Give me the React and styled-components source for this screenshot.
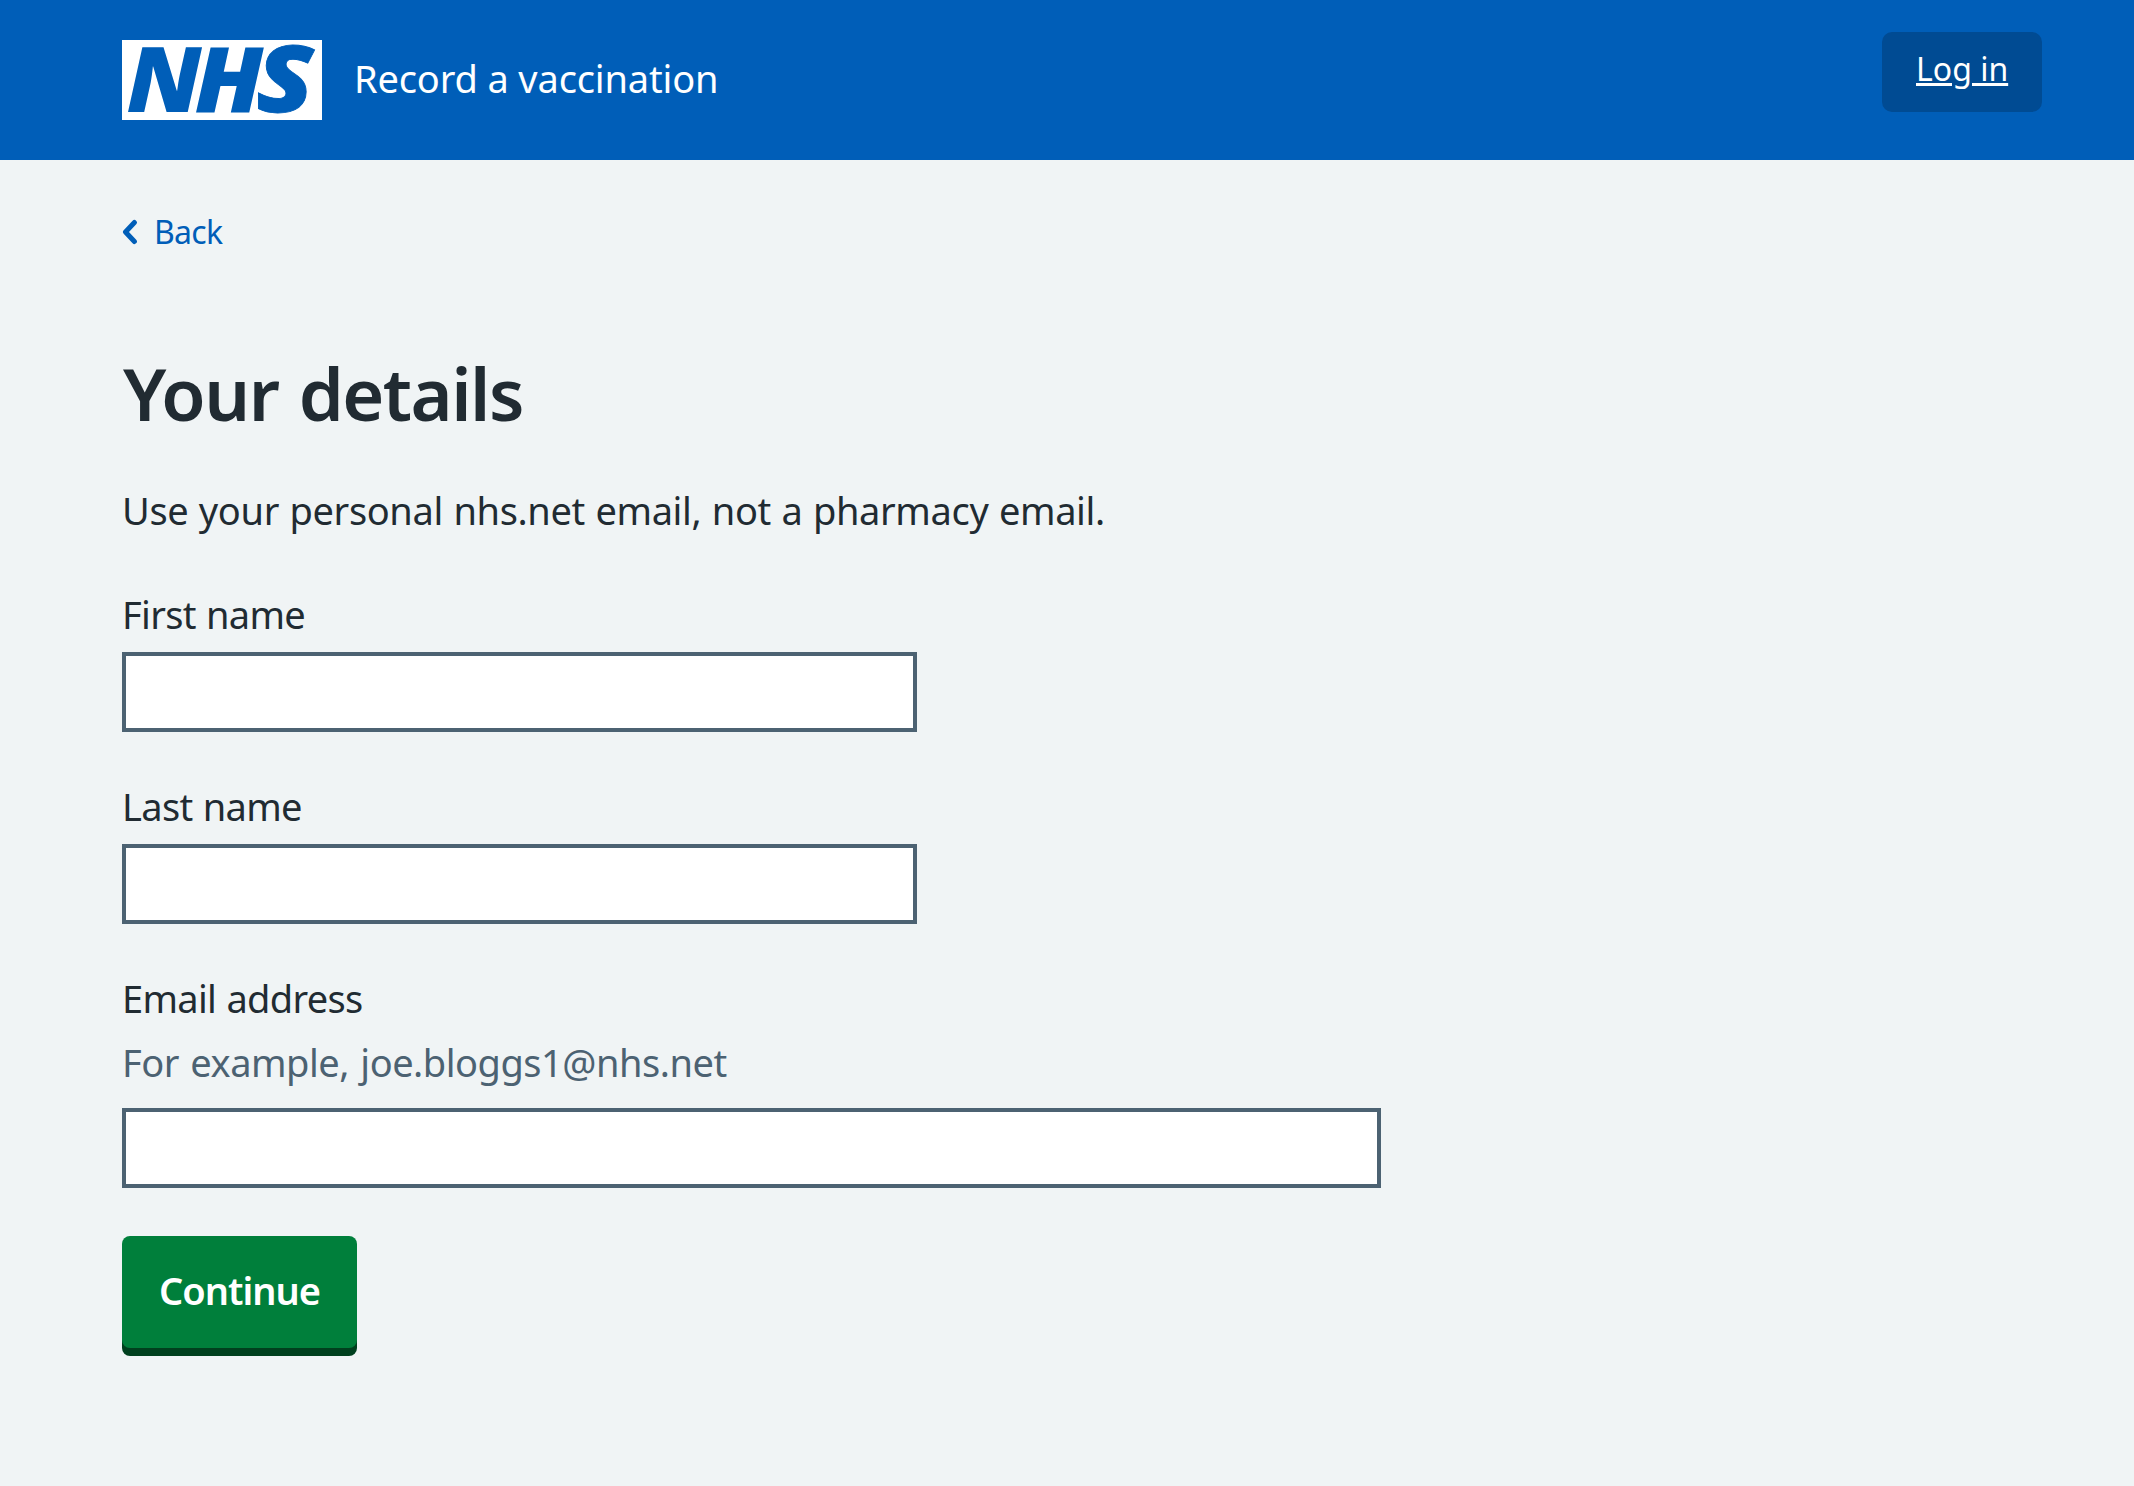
import React from 'react';
import styled, { createGlobalStyle } from 'styled-components';

const GlobalStyle = createGlobalStyle`
  *, *::before, *::after {
    box-sizing: border-box;
  }
  body {
    margin: 0;
    min-height: 100vh;
    background: #f0f4f5;
    color: #212b32;
    font-family: "Noto Sans", "Open Sans", sans-serif;
    font-size: 38px;
    line-height: 56px;
  }
`;

const Header = styled.header`
  display: flex;
  align-items: flex-start;
  height: 160px;
  padding: 32px 92px 0 122px;
  background: #005eb8;
  color: #ffffff;
`;

const Brand = styled.a`
  display: flex;
  align-items: center;
  gap: 32px;
  margin-top: 8px;
  color: inherit;
  text-decoration: none;
`;

const Logo = styled.svg`
  display: block;
  width: 200px;
  height: 80px;
  overflow: visible;
  background: #ffffff;
  fill: #005eb8;
  font: italic 800 91px "Open Sans", "Noto Sans", sans-serif;
`;

const ServiceName = styled.span`
  padding-bottom: 5px;
  letter-spacing: -0.15px;
`;

const AccountLink = styled.a`
  width: 160px;
  height: 80px;
  margin-left: auto;
  padding: 13px 0 0 34px;
  border-radius: 10px;
  background: #004b93;
  color: #ffffff;
  font-size: 32px;
  line-height: 48px;
  text-decoration: underline;
  text-decoration-thickness: 3px;
  text-underline-offset: 2px;
`;

const Main = styled.main`
  display: flex;
  flex-direction: column;
  align-items: flex-start;
  padding: 48px 122px 0;
`;

const BackLink = styled.a`
  display: flex;
  align-items: center;
  gap: 16px;
  color: #005eb8;
  font-size: 32px;
  line-height: 48px;
  letter-spacing: -0.7px;
  text-decoration: none;
`;

const Chevron = styled.svg`
  display: block;
  width: 16px;
  height: 26px;
  fill: none;
  stroke: #005eb8;
  stroke-width: 5;
  stroke-linecap: round;
  stroke-linejoin: round;
`;

const Title = styled.h1`
  margin: 97px 0 49px 1px;
  font-size: 72px;
  font-weight: 600;
  line-height: 80px;
  letter-spacing: -1.5px;
  word-spacing: 3px;
`;

const Lede = styled.p`
  margin: 0 0 48px;
  letter-spacing: -0.36px;
  word-spacing: 1px;
`;

const Form = styled.form`
  display: flex;
  flex-direction: column;
  align-items: flex-start;
`;

const Field = styled.div`
  display: flex;
  flex-direction: column;
  margin-bottom: ${(p) => p.$gap || 46}px;
`;

const Label = styled.label`
  letter-spacing: -0.67px;
  word-spacing: 1px;
`;

const Hint = styled.span`
  margin: 8px 0;
  color: #4c6272;
  letter-spacing: -0.48px;
  word-spacing: 2px;
`;

const Input = styled.input`
  width: ${(p) => p.$width}px;
  height: 80px;
  margin: ${(p) => p.$offset}px 0 0;
  padding: 8px;
  border: 4px solid #4c6272;
  border-radius: 0;
  background: #ffffff;
  color: #212b32;
  font: inherit;
`;

const Button = styled.button`
  width: 235px;
  height: 112px;
  padding: 0 0 4px;
  border: 0;
  border-radius: 8px;
  background: #007f3b;
  box-shadow: 0 8px 0 #00401e;
  color: #ffffff;
  font: inherit;
  font-weight: 600;
  letter-spacing: -0.95px;
`;

const fields = [
  { id: 'first-name', label: 'First name', width: 795 },
  { id: 'last-name', label: 'Last name', width: 795 },
  { id: 'email', label: 'Email address', hint: 'For example, joe.bloggs1@nhs.net', width: 1259, gap: 48 },
];

export default function App() {
  return (
    <>
      <GlobalStyle />
      <Header>
        <Brand href="#">
          <Logo viewBox="0 0 200 80" role="img" aria-label="NHS">
            <text transform="translate(4.5 72.3) scale(1.045 1)">N</text>
            <text transform="translate(72.5 72.3) scale(1.06 1)">H</text>
            <text
              transform="translate(134.3 72.3) scale(1.15 1.01)"
              stroke="#005eb8"
              strokeWidth="0.8"
            >
              S
            </text>
          </Logo>
          <ServiceName>Record a vaccination</ServiceName>
        </Brand>
        <AccountLink href="#">Log in</AccountLink>
      </Header>
      <Main>
        <BackLink href="#">
          <Chevron viewBox="0 0 16 26" aria-hidden="true">
            <path d="M12.4 3.5 3.5 13l8.9 9.5" />
          </Chevron>
          Back
        </BackLink>
        <Title>Your details</Title>
        <Lede>Use your personal nhs.net email, not a pharmacy email.</Lede>
        <Form>
          {fields.map((f) => (
            <Field key={f.id} $gap={f.gap}>
              <Label htmlFor={f.id}>{f.label}</Label>
              {f.hint && <Hint>{f.hint}</Hint>}
              <Input id={f.id} type="text" $width={f.width} $offset={10} />
            </Field>
          ))}
          <Button type="button">Continue</Button>
        </Form>
      </Main>
    </>
  );
}
